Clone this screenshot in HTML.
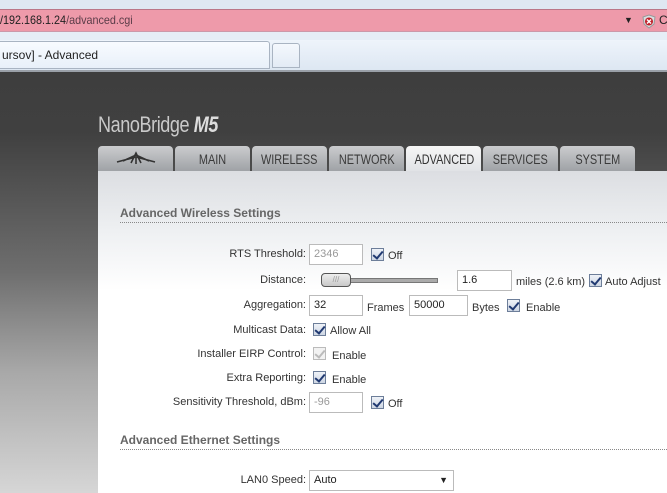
<!DOCTYPE html>
<html><head><meta charset="utf-8"><style>
*{margin:0;padding:0;box-sizing:border-box}
body{width:667px;height:493px;overflow:hidden;position:relative;font-family:"Liberation Sans",Arial,sans-serif;background:#fff}
.abs{position:absolute}
#top{left:0;top:0;width:667px;height:9px;background:#dfe8f2}
#url{left:0;top:9px;width:667px;height:23px;background:#ee9aaa;border-top:1px solid #b78;border-bottom:1px solid #c9a;font-size:12px;line-height:21px;color:#5a3c48}
#strip{left:0;top:32px;width:667px;height:8px;background:#e6eef7}
#tabs{left:0;top:40px;width:667px;height:32px;background:linear-gradient(#eef4fb,#dde7f2);border-bottom:2px solid #9aa0a8}
#t1{left:-5px;top:41px;width:275px;height:28px;background:linear-gradient(#f8fbff,#e8f0f9);border:1px solid #a9b4c2;border-radius:3px 3px 0 0;font-size:12px;line-height:26px;padding-left:6px;color:#222}
#t2{left:272px;top:43px;width:28px;height:25px;background:linear-gradient(#f4f8fd,#e3ebf5);border:1px solid #a9b4c2;border-radius:3px 3px 0 0}
#bg{left:0;top:72px;width:667px;height:421px;background:linear-gradient(#3e3e3e 0px,#404040 60px,#6e6e6e 200px,#a8a8a8 300px,#d6d6d6 421px)}
#logo{left:98px;top:112px;font-size:22px;color:#c9c9c9;letter-spacing:-0.5px;transform:scaleX(0.82);transform-origin:0 0;white-space:nowrap}
#logo b{font-style:italic;color:#ddd}
.tab{position:absolute;top:146px;width:75px;height:25px;background:linear-gradient(#cbccce,#9fa2a6);border-radius:4px 4px 0 0;text-align:center;font-size:14px;line-height:26px;color:#3a3a3a;white-space:nowrap;overflow:hidden}
.tab span{display:inline-block;transform:scaleX(0.78)}
.tab.act{background:linear-gradient(#f6f6f6,#e1e3e6);color:#333}
#panel{left:98px;top:171px;width:569px;height:322px;background:linear-gradient(#dcdee2 0px,#eef0f2 60px,#fff 120px,#fff)}
.h{position:absolute;left:120px;font-weight:bold;font-size:12px;color:#666;width:547px;border-bottom:1px dotted #888;padding-bottom:2px}
.lbl{position:absolute;font-size:11px;color:#333;text-align:right;right:361px}
.inp{position:absolute;height:21px;border:1px solid #bbb;background:#fff;font-size:11px;padding-left:4px;line-height:19px;color:#222}
.inp.dis{color:#999}
.cb{position:absolute;width:13px;height:13px;border:1px solid #6d7e99;background:linear-gradient(#eef2f8,#cdd6e3)}
.cb::after{content:"";position:absolute;left:3px;top:0px;width:4px;height:8px;border:solid #213a72;border-width:0 2px 2px 0;transform:rotate(40deg)}
.cb.dis{border-color:#bbb;background:#f2f2f2}
.cb.dis::after{border-color:#bbb}
.t{position:absolute;font-size:11px;color:#333}
</style></head><body>
<div class="abs" id="top"></div>
<div class="abs" id="url"><span style="display:inline-block;transform:scaleX(0.9);transform-origin:0 0;white-space:nowrap"><span style="color:#222">/192.168.1.24</span><span>/advanced.cgi</span></span>
<span class="abs" style="left:624px;top:0;font-size:9px;color:#222">▼</span>
<svg class="abs" style="left:642px;top:4px" width="14" height="15"><path d="M7 1 L13 3 L12 10 L7 14 L2 10 L1 3Z" fill="#d9dde0" stroke="#999"/><circle cx="7" cy="7.5" r="4" fill="#c0202a"/><path d="M5 5.5l4 4M9 5.5l-4 4" stroke="#fff" stroke-width="1.4"/></svg>
<span class="abs" style="left:659px;top:0;color:#222">C</span></div>
<div class="abs" id="strip"></div>
<div class="abs" id="tabs"></div>
<div class="abs" id="t1">ursov] - Advanced</div>
<div class="abs" id="t2"></div>
<div class="abs" id="bg"></div>
<div class="abs" id="logo">NanoBridge <b>M5</b></div>
<div class="tab" style="left:98px"><svg width="50" height="20" style="margin-top:3px"><path d="M6 13 L25 8 L44 13 M12 12 L25 6 L38 12 M20 14 L25 4 L30 14 M25 9 L25 15" stroke="#333" stroke-width="1.6" fill="none"/></svg></div>
<div class="tab" style="left:175px"><span>MAIN</span></div>
<div class="tab" style="left:252px"><span>WIRELESS</span></div>
<div class="tab" style="left:329px"><span>NETWORK</span></div>
<div class="tab act" style="left:406px"><span>ADVANCED</span></div>
<div class="tab" style="left:483px"><span>SERVICES</span></div>
<div class="tab" style="left:560px"><span>SYSTEM</span></div>
<div class="abs" id="panel"></div>

<div class="h" style="top:206px">Advanced Wireless Settings</div>

<div class="lbl" style="top:248px">RTS Threshold:</div>
<div class="inp dis" style="left:309px;top:244px;width:54px">2346</div>
<div class="cb" style="left:371px;top:248px"></div><div class="t" style="left:388px;top:250px">Off</div>

<div class="lbl" style="top:274px">Distance:</div>
<div class="abs" style="left:350px;top:278px;width:88px;height:5px;background:#aaa;border:1px solid #777"></div>
<div class="abs" style="left:321px;top:273px;width:30px;height:14px;border:1px solid #555;border-radius:4px;background:linear-gradient(#eee,#c8c8c8);font-size:8px;color:#999;text-align:center;line-height:12px">///</div>
<div class="inp" style="left:457px;top:270px;width:55px">1.6</div>
<div class="t" style="left:516px;top:276px">miles (2.6 km)</div>
<div class="cb" style="left:589px;top:274px"></div><div class="t" style="left:605px;top:276px">Auto Adjust</div>

<div class="lbl" style="top:299px">Aggregation:</div>
<div class="inp" style="left:309px;top:295px;width:54px">32</div>
<div class="t" style="left:367px;top:302px">Frames</div>
<div class="inp" style="left:409px;top:295px;width:59px">50000</div>
<div class="t" style="left:472px;top:302px">Bytes</div>
<div class="cb" style="left:507px;top:299px"></div><div class="t" style="left:526px;top:302px">Enable</div>

<div class="lbl" style="top:324px">Multicast Data:</div>
<div class="cb" style="left:313px;top:323px"></div><div class="t" style="left:330px;top:325px">Allow All</div>

<div class="lbl" style="top:348px">Installer EIRP Control:</div>
<div class="cb dis" style="left:313px;top:347px"></div><div class="t" style="left:332px;top:350px">Enable</div>

<div class="lbl" style="top:372px">Extra Reporting:</div>
<div class="cb" style="left:313px;top:371px"></div><div class="t" style="left:332px;top:374px">Enable</div>

<div class="lbl" style="top:396px">Sensitivity Threshold, dBm:</div>
<div class="inp dis" style="left:309px;top:392px;width:54px">-96</div>
<div class="cb" style="left:371px;top:396px"></div><div class="t" style="left:388px;top:398px">Off</div>

<div class="h" style="top:433px">Advanced Ethernet Settings</div>

<div class="lbl" style="top:474px">LAN0 Speed:</div>
<div class="inp" style="left:309px;top:470px;width:145px">Auto<span style="position:absolute;right:5px;top:0;font-size:9px">▼</span></div>
</body></html>
